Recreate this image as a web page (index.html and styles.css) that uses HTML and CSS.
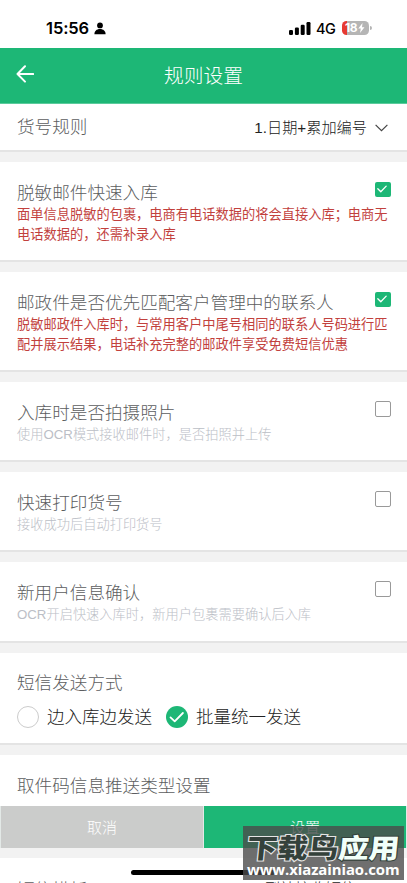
FILE: index.html
```html
<!DOCTYPE html>
<html lang="zh-CN">
<head>
<meta charset="UTF-8">
<meta name="viewport" content="width=device-width, initial-scale=1">
<title>规则设置</title>
<link rel="stylesheet" href="styles.css">
</head>
<body>
<div class="screen">
  <div class="status">
    <span class="time">15:56</span>
    <svg class="person" width="12" height="13" viewBox="0 0 12 13"><circle cx="6" cy="3.400" r="2.900"/><path d="M.4 12.200C.4 9.200 2.600 7.100 6 7.100s5.600 2.100 5.600 5.100z"/></svg>
    <svg class="signal" width="22" height="14" viewBox="0 0 22 14"><rect x="0" y="9" width="4" height="5" rx="1.200"/><rect x="5.900" y="6.500" width="4" height="7.500" rx="1.200"/><rect x="11.700" y="3.800" width="4" height="10.200" rx="1.200"/><rect x="17.500" y="1" width="4" height="13" rx="1.200"/></svg>
    <span class="net">4G</span>
    <span class="battery"><span class="pct">18</span><svg width="7" height="10" viewBox="0 0 7 10"><path d="M4.500 0L.3 5.600h2.500L2 10l4.500-5.800H4z" fill="#fff"/></svg></span>
  </div>
  <header class="nav">
    <svg class="back" width="18" height="18" viewBox="0 0 18 18"><path d="M9 1.300L1.500 9 9 16.600M1.500 9H17.200"/></svg>
    <h1>规则设置</h1>
  </header>
  <section class="card rule">
    <h2>货号规则</h2>
    <span class="select">1.日期+累加编号</span>
    <svg class="chevron" width="13" height="8" viewBox="0 0 13 8"><path d="M.6.900l5.900 5.800L12.400.900"/></svg>
  </section>
  <section class="card option tall">
    <h2>脱敏邮件快速入库</h2>
    <p class="warn">面单信息脱敏的包裹，电商有电话数据的将会直接入库；电商无<br>电话数据的，还需补录入库</p>
    <span class="box on"><svg width="15" height="15" viewBox="0 0 15 15"><path d="M2.800 6.800l3 3 5.400-5.700"/></svg></span>
  </section>
  <section class="card option tall">
    <h2>邮政件是否优先匹配客户管理中的联系人</h2>
    <p class="warn">脱敏邮政件入库时，与常用客户中尾号相同的联系人号码进行匹<br>配并展示结果，电话补充完整的邮政件享受免费短信优惠</p>
    <span class="box on"><svg width="15" height="15" viewBox="0 0 15 15"><path d="M2.800 6.800l3 3 5.400-5.700"/></svg></span>
  </section>
  <section class="card option">
    <h2>入库时是否拍摄照片</h2>
    <p>使用OCR模式接收邮件时，是否拍照并上传</p>
    <span class="box"></span>
  </section>
  <section class="card option">
    <h2>快速打印货号</h2>
    <p>接收成功后自动打印货号</p>
    <span class="box"></span>
  </section>
  <section class="card option last">
    <h2>新用户信息确认</h2>
    <p>OCR开启快速入库时，新用户包裹需要确认后入库</p>
    <span class="box"></span>
  </section>
  <section class="card sms">
    <h2>短信发送方式</h2>
    <div class="radios">
      <span class="radio"></span><span class="choice">边入库边发送</span>
      <span class="radio on"><svg width="22" height="22" viewBox="0 0 22 22"><path d="M4.500 11.400l4.200 4 8.200-8.400"/></svg></span><span class="choice">批量统一发送</span>
    </div>
  </section>
  <section class="push"><h2>取件码信息推送类型设置</h2></section>
  <div class="actions"><button class="cancel">取消</button><button class="confirm">设置</button></div>
  <section class="template"><h2>短信模板</h2><span>到站接收短信</span></section>
  <div class="home"></div>
  <div class="mark">
    <div class="brand"><span class="dark">下载鸟</span><span class="light">应用</span></div>
    <div class="url">www.xiazainiao.com</div>
  </div>
</div>
</body>
</html>
```
FILE: styles.css
```css
* { box-sizing: border-box; }
body { margin: 0; background: #f2f2f2; font-family: "Liberation Sans", "Noto Sans CJK SC", sans-serif; font-weight: 300; }
h1, h2, p { margin: 0; font-weight: 300; white-space: nowrap; }
.screen { position: relative; width: 407px; height: 883px; overflow: hidden; display: flex; flex-direction: column; }
.screen > * { flex-shrink: 0; }
.status { height: 48px; background: #fff; display: flex; align-items: center; padding: 8px 38px 0 46px; font-family: Inter, sans-serif; color: #000; }
.time { font-size: 16.5px; font-weight: 600; width: 45px; letter-spacing: -.1px; }
.person { margin-left: 3px; }
.signal { margin-left: auto; margin-right: 5px; }
.net { font-size: 14.5px; font-weight: 500; width: 20px; letter-spacing: -.5px; }
.battery { position: relative; margin-left: 6px; width: 27px; height: 14px; border-radius: 4.5px; background: linear-gradient(90deg, #e63a32 5px, #b5b5b5 5px); display: flex; align-items: center; gap: 1px; padding-left: 3px; color: #fff; }
.battery::after { content: ""; position: absolute; left: 28px; top: 5px; width: 1.5px; height: 4px; border-radius: 0 2px 2px 0; background: #b5b5b5; }
.pct { font-size: 12px; line-height: 14px; font-weight: 700; letter-spacing: -.3px; }
.nav { height: 56px; background: #1db776; color: #fff; display: grid; grid-template-columns: 40px 1fr 40px; align-items: center; padding-bottom: 3px; border-bottom: 1px solid #5bcb9c; }
.nav h1 { font-size: 19.8px; line-height: 28px; text-align: center; padding-top: 3px; }
.back { margin-left: 15.500px; }
.back path { fill: none; stroke: #fff; stroke-width: 2; stroke-linecap: round; stroke-linejoin: round; }
.card { background: #fff; border-bottom: 2px solid #e4e4e4; margin-bottom: 10px; padding: 0 17px; }
h2 { font-size: 17.6px; line-height: 24px; color: #5c5d60; }
.rule { height: 48px; display: flex; align-items: center; padding-right: 19px; }
.select { margin-left: auto; margin-top: 2px; font-size: 15.200px; line-height: 22px; color: #222; }
.chevron { margin-left: 8px; margin-top: 2px; }
.chevron path { fill: none; stroke: #444; stroke-width: 1.2; }
.option { height: 80px; display: grid; grid-template-columns: minmax(0, 1fr) 16px; align-content: start; padding-top: 19px; padding-right: 16px; }
.option.tall { height: 100px; }
.option.last { height: 81px; }
.option h2 { grid-area: 1 / 1; }
.option p { grid-area: 2 / 1; font-size: 13.240px; line-height: 19.5px; color: #bbbec6; }
.option p.warn { color: #c2413d; font-weight: 400; }
.box { grid-area: 1 / 2; width: 16px; height: 16px; border: 1px solid #999; border-radius: 2px; }
.box.on { border: 0; background: #1db776; margin-top: 1px; width: 15.5px; height: 15px; }
.box svg { display: block; }
.box path, .radio path { fill: none; stroke: #fff; stroke-width: 1.300; stroke-linecap: round; stroke-linejoin: round; }
.sms { height: 92px; padding-top: 18px; }
.radios { display: flex; align-items: center; margin-top: 10px; height: 24px; }
.radio { width: 22px; height: 22px; border: 1px solid #ccc; border-radius: 50%; }
.radio.on { border: 0; background: #1db776; margin-left: 14px; }
.radio svg { display: block; }
.radio path { stroke-width: 1.8; }
.choice { margin-left: 8px; font-size: 17.500px; line-height: 24px; color: #222; white-space: nowrap; }
.push { background: #fff; height: 51px; padding: 19px 17px 0; }
.actions { display: flex; gap: 1px; height: 42px; padding: 0 1px; background: #e3e9e7; }
.actions button { flex: 1; margin: 0; padding: 0 0 2px; border: 0; color: #fff; font: 300 15px "Liberation Sans", "Noto Sans CJK SC", sans-serif; }
.actions .cancel { background: #cbcccb; }
.actions .confirm { background: #1db776; }
.template { background: #fff; margin-top: 10px; height: 60px; padding: 20px 51px 0 17px; display: flex; justify-content: space-between; align-items: flex-start; }
.template span { font-size: 15.200px; line-height: 22px; color: #222; }
.home { position: absolute; left: 131px; top: 870px; width: 144px; height: 5px; border-radius: 3px; background: #000; }
.mark { position: absolute; left: 243px; top: 826px; width: 161px; height: 54px; background: rgba(75, 75, 75, .8); }
.brand { display: flex; justify-content: center; padding-top: 4px; font-family: "Noto Sans CJK SC", sans-serif; font-size: 30.5px; line-height: 34px; font-weight: 900; white-space: nowrap; transform: scaleY(.88) skewX(-5deg); }
.brand span { -webkit-text-stroke: 2.500px #e4e4e4; paint-order: stroke fill; }
.brand .dark { color: #34413b; }
.brand .light { color: #f1fff9; -webkit-text-stroke: 2.500px #34413b; }
.url { margin: -5px 0 0 4px; color: #fff; font: 700 14.900px/20px "Open Sans", sans-serif; letter-spacing: -.07px; white-space: nowrap; }
```
